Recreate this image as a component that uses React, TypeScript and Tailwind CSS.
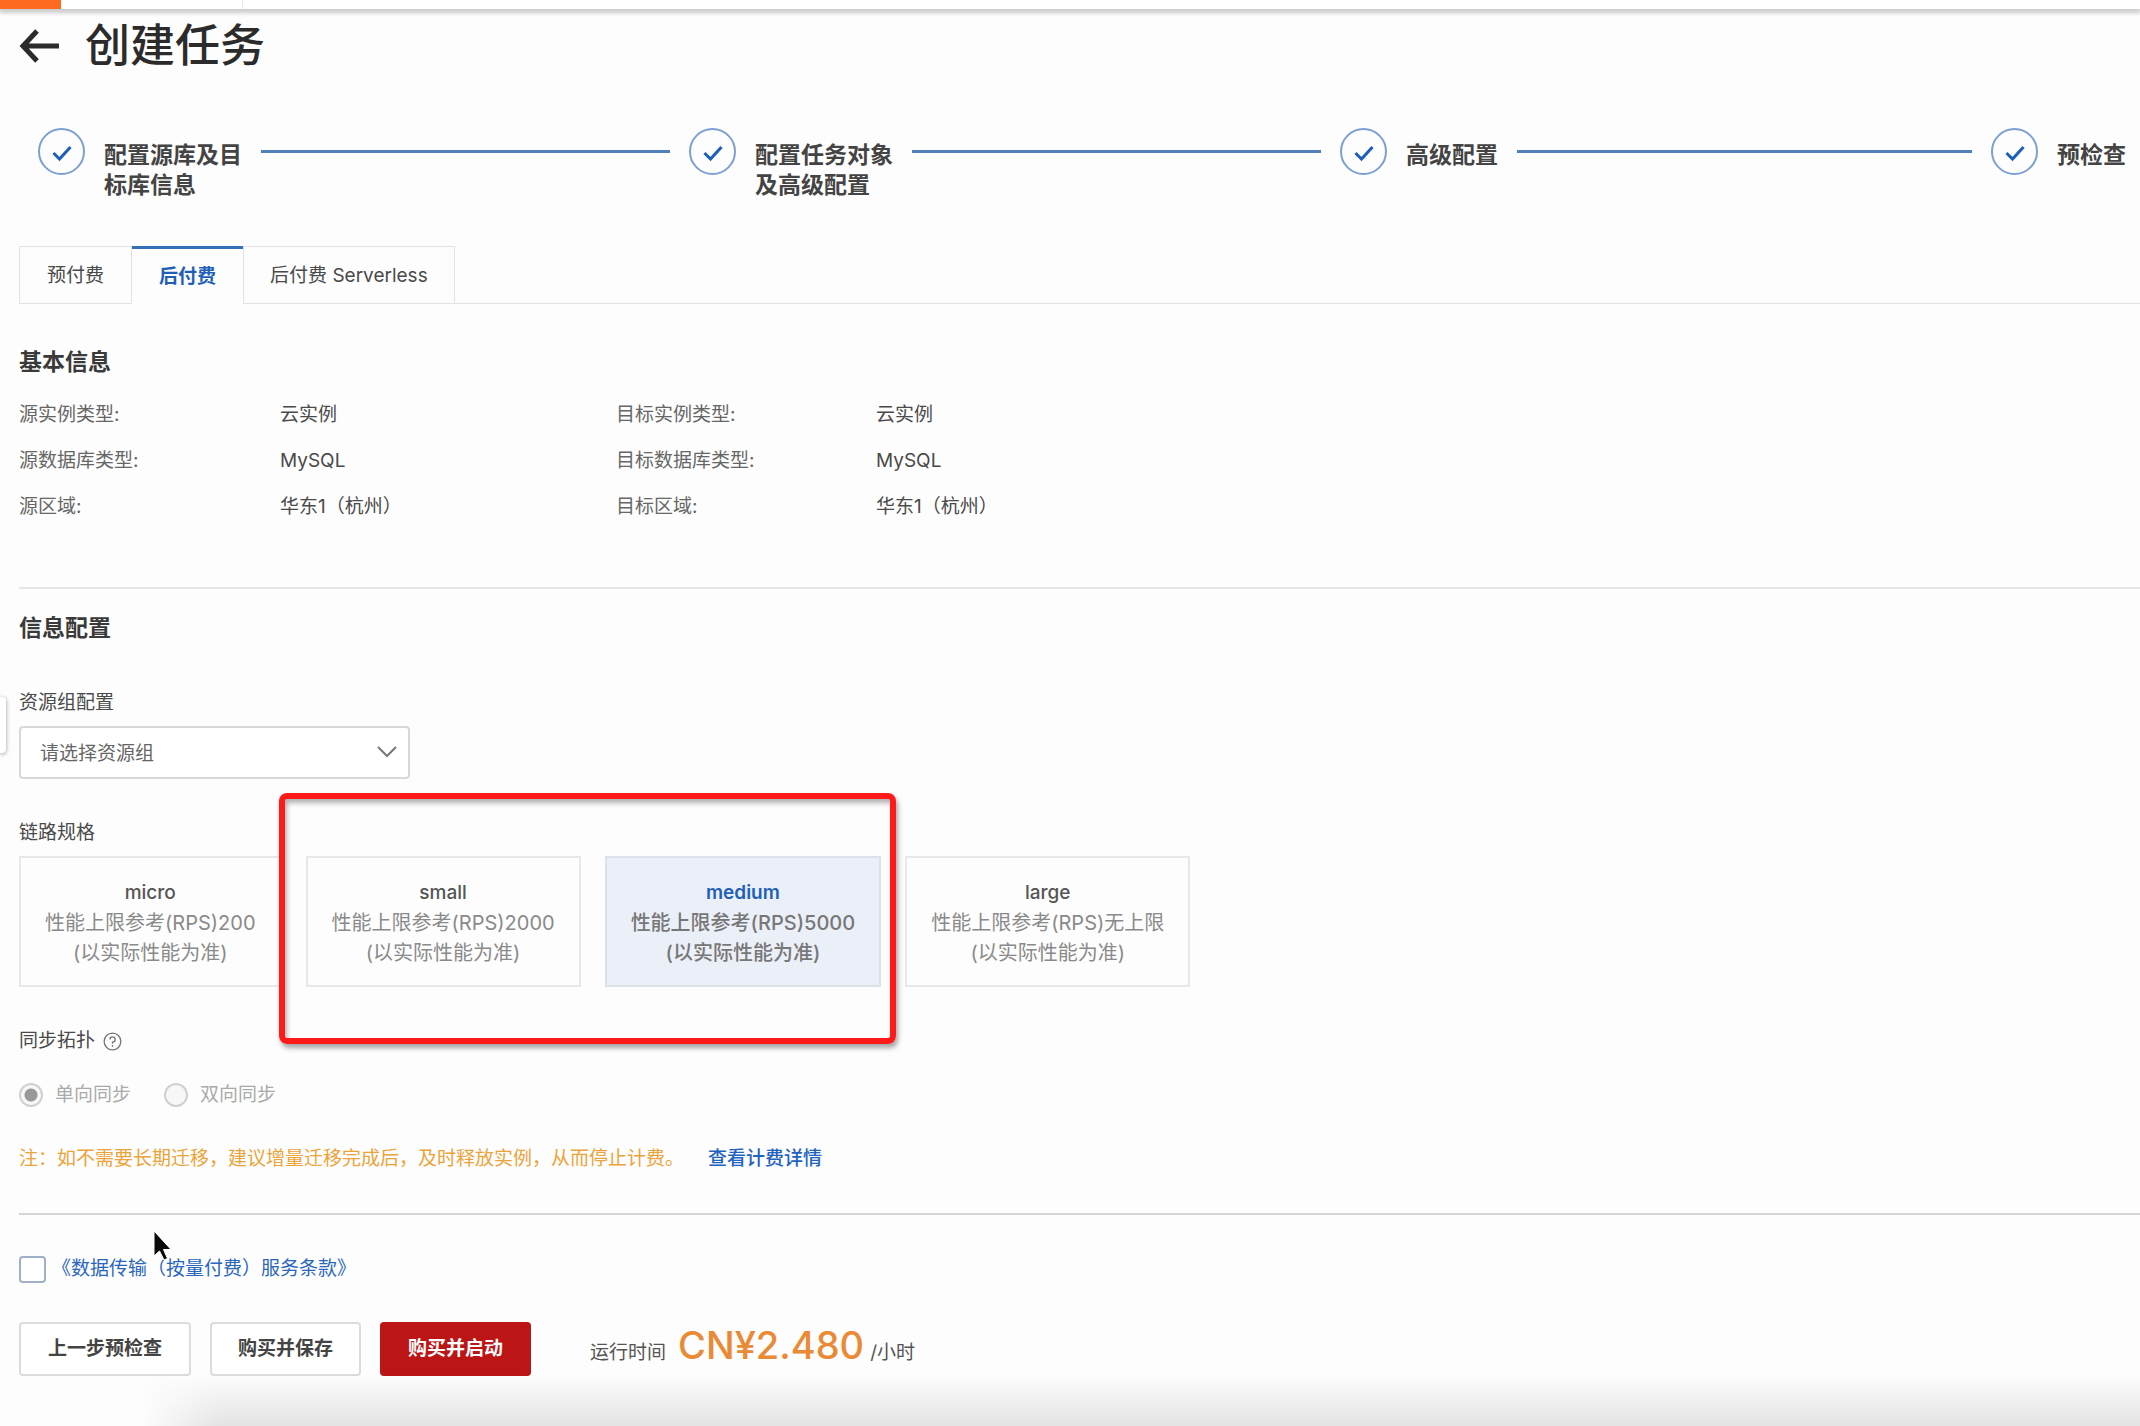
import { Fragment } from "react";

const steps = [
  ["配置源库及目", "标库信息"],
  ["配置任务对象", "及高级配置"],
  ["高级配置"],
  ["预检查"],
];

const tabs = [
  { label: "预付费", active: false },
  { label: "后付费", active: true },
  { label: "后付费 Serverless", active: false },
];

const info = [
  ["源实例类型:", "云实例", "目标实例类型:", "云实例"],
  ["源数据库类型:", "MySQL", "目标数据库类型:", "MySQL"],
  ["源区域:", "华东1（杭州）", "目标区域:", "华东1（杭州）"],
];

const specs = [
  { name: "micro", limit: "性能上限参考(RPS)200", active: false },
  { name: "small", limit: "性能上限参考(RPS)2000", active: false },
  { name: "medium", limit: "性能上限参考(RPS)5000", active: true },
  { name: "large", limit: "性能上限参考(RPS)无上限", active: false },
];

const directions = [
  { id: "one-way", label: "单向同步", checked: true },
  { id: "two-way", label: "双向同步", checked: false },
];

function TopBar() {
  return (
    <div className="flex h-[9px] bg-white shadow-[0_3px_4px_1px_rgba(0,0,0,0.2)]">
      <div className="w-[61px] bg-[#fd6a20]" />
      <div className="w-[182px] border-r border-[#e8e8e8]" />
    </div>
  );
}

function Steps() {
  return (
    <ol className="mt-[52px] flex h-[118px] items-start pl-[38px] pr-3.5">
      {steps.map((lines, i) => (
        <li
          key={lines[0]}
          className={`flex items-start ${i < steps.length - 1 ? "flex-1" : ""}`}
        >
          <span className="flex size-[47px] shrink-0 items-center justify-center rounded-full border-2 border-[#7d9fd2]">
            <svg viewBox="0 0 20 20" className="size-5" fill="none" stroke="#1d5fb8" strokeWidth="3">
              <path d="M1.5 11 L7.5 17 L18.5 5" />
            </svg>
          </span>
          <span className="ml-[19px] mt-3 shrink-0 text-[23px] leading-[30px] font-bold text-[#444]">
            {lines.map((line) => (
              <span key={line} className="block">
                {line}
              </span>
            ))}
          </span>
          {i < steps.length - 1 && (
            <span className="mx-[19px] mt-[22px] h-[3px] flex-1 bg-[#4f80b8]" />
          )}
        </li>
      ))}
    </ol>
  );
}

function Tabs() {
  return (
    <div role="tablist" className="flex h-[58px] pl-[19px]">
      {tabs.map((tab, i) => (
        <button
          key={tab.label}
          type="button"
          role="tab"
          aria-selected={tab.active}
          className={
            tab.active
              ? "border-t-[3px] border-[#3470b8] px-[27px] font-bold text-[#1f5fb8]"
              : `border border-[#e3e3e6] pt-0.5 text-[#4a4a4a] ${i === 0 ? "px-[27px]" : "px-[26px]"}`
          }
        >
          {tab.label}
        </button>
      ))}
      <div className="flex-1 border-b border-[#e3e3e6]" />
    </div>
  );
}

function Cursor() {
  return (
    <svg viewBox="0 0 20 32" className="pointer-events-none absolute left-[134px] -top-6 h-8 w-5">
      <path
        d="M1 1 V26 L6.500 21 L11 30 L14.500 28.500 L10.500 19.500 H18 Z"
        fill="#0a0a0a"
        stroke="#fff"
        strokeWidth="1"
      />
    </svg>
  );
}

export default function App() {
  return (
    <div className="relative min-h-screen overflow-hidden bg-[#fdfdfd] font-['Inter','Noto_Sans_CJK_SC',sans-serif] text-[19px] leading-[30px] text-[#4a4a4a]">
      <TopBar />

      <header className="mt-[7px] flex h-[60px] items-center pl-[19px]">
        <button type="button" aria-label="返回">
          <svg viewBox="0 0 40 34" className="h-[34px] w-10" fill="none" stroke="#2b2b2b" strokeWidth="5">
            <path d="M4 17 H40 M18 2 L4 17 L18 32" />
          </svg>
        </button>
        <h1 className="ml-[26px] text-[45px] leading-[60px] font-medium text-[#2b2b2b]">创建任务</h1>
      </header>

      <Steps />
      <Tabs />

      <main className="pl-[19px]">
        <section className="h-[285px] border-b-2 border-[#e6e6e8] pt-[43px]">
          <h2 className="text-[23px] font-bold text-[#3a3a3a]">基本信息</h2>
          <dl className="mt-[15px] grid grid-cols-[261px_336px_260px_1fr] leading-[46px]">
            {info.map((row) => (
              <Fragment key={row[0]}>
                <dt className="text-[#666]">{row[0]}</dt>
                <dd>{row[1]}</dd>
                <dt className="text-[#666]">{row[2]}</dt>
                <dd>{row[3]}</dd>
              </Fragment>
            ))}
          </dl>
        </section>

        <section className="border-b-2 border-[#d6d6d8] pt-6 pb-[39px]">
          <h2 className="text-[23px] font-bold text-[#3a3a3a]">信息配置</h2>

          <label htmlFor="group" className="mt-[45px] block">
            资源组配置
          </label>
          <div className="relative mt-2 w-[391px]">
            <select
              id="group"
              className="h-[53px] w-full appearance-none rounded-sm border-2 border-[#d8d8da] bg-white pt-0.5 pl-[19px] text-[#666]"
            >
              <option>请选择资源组</option>
            </select>
            <svg
              viewBox="0 0 20 12"
              className="pointer-events-none absolute top-5 right-[13px] h-3 w-5"
              fill="none"
              stroke="#777"
              strokeWidth="2"
            >
              <path d="M1 1 L10 10 L19 1" />
            </svg>
          </div>

          <h3 className="mt-[39px]">链路规格</h3>
          <div className="relative mt-2 flex gap-6">
            {specs.map((spec) => (
              <button
                key={spec.name}
                type="button"
                aria-pressed={spec.active}
                className={`border-2 px-6 pt-5 pb-[17px] text-xl leading-[30px] ${
                  spec.active
                    ? "border-[#dde1ea] bg-[#ebeff7] font-medium text-[#777]"
                    : "border-[#e8e8ea] text-[#8a8a8a]"
                }`}
              >
                <span
                  className={`block text-[19px] ${
                    spec.active ? "font-semibold text-[#1f5fb8]" : "font-medium text-[#555]"
                  }`}
                >
                  {spec.name}
                </span>
                <span className="block">{spec.limit}</span>
                <span className="block">(以实际性能为准)</span>
              </button>
            ))}
            <div className="pointer-events-none absolute -top-[63px] left-[260px] h-[251px] w-[617px] rounded-lg border-6 border-[#ff1a1a] shadow-[2px_4px_5px_rgba(0,0,0,0.35),inset_2px_4px_5px_rgba(0,0,0,0.3)]" />
          </div>

          <h3 className="mt-[39px] flex items-center gap-2">
            同步拓扑
            <svg viewBox="0 0 20 20" className="size-[19px]" fill="none" stroke="#777" strokeWidth="1.4">
              <circle cx="10" cy="10" r="8.800" />
              <path d="M7.200 8 A2.800 2.800 0 1 1 10 10.800 V12.400 M10 13.800 V15.400" />
            </svg>
          </h3>
          <div className="mt-6 flex gap-[33px] text-[#aaa]">
            {directions.map((d) => (
              <div key={d.id} className="flex items-center gap-3">
                <input
                  id={d.id}
                  type="radio"
                  name="direction"
                  defaultChecked={d.checked}
                  disabled
                  className="size-6 appearance-none rounded-full border-2 border-[#d0d0d2] bg-[#f7f7f8] checked:bg-[radial-gradient(circle,#999_6px,#f7f7f8_7px)]"
                />
                <label htmlFor={d.id}>{d.label}</label>
              </div>
            ))}
          </div>

          <p className="mt-[34px] text-[#eba43a]">
            注：如不需要长期迁移，建议增量迁移完成后，及时释放实例，从而停止计费。
            <a href="#billing" className="ml-6 font-medium text-[#1f63c0]">
              查看计费详情
            </a>
          </p>
        </section>

        <div className="relative mt-[39px] flex h-[30px] items-center">
          <input
            id="terms"
            type="checkbox"
            aria-label="同意服务条款"
            className="size-[27px] appearance-none rounded-sm border-2 border-[#9fb0c8] bg-white"
          />
          <a href="#terms-text" className="ml-1.5 text-[#2a66bd]">
            《数据传输（按量付费）服务条款》
          </a>
          <Cursor />
        </div>

        <div className="mt-[38px] flex items-center gap-[19px] text-[#444]">
          <button type="button" className="h-[54px] rounded-sm border-2 border-[#dcdcde] bg-white px-[27px] font-bold">
            上一步预检查
          </button>
          <button type="button" className="h-[54px] rounded-sm border-2 border-[#dcdcde] bg-white px-[26px] font-bold">
            购买并保存
          </button>
          <button type="button" className="h-[54px] rounded-sm bg-[#bb1515] px-7 font-bold text-white">
            购买并启动
          </button>
          <div className="ml-10 flex items-baseline text-[#555]">
            运行时间
            <span className="mr-1.5 ml-3 text-[38px] font-medium text-[#ea8a34]">CN¥2.480</span>
            /小时
          </div>
        </div>
      </main>

      {/* collapsed side panel handle */}
      <div className="absolute top-[697px] left-0 h-14 w-[6px] rounded-r bg-white shadow-[0_1px_4px_rgba(0,0,0,0.4)]" />
      <div className="pointer-events-none absolute right-0 bottom-0 left-[140px] h-[52px] bg-linear-to-b from-transparent to-black/10 mask-l-from-[96%]" />
    </div>
  );
}
